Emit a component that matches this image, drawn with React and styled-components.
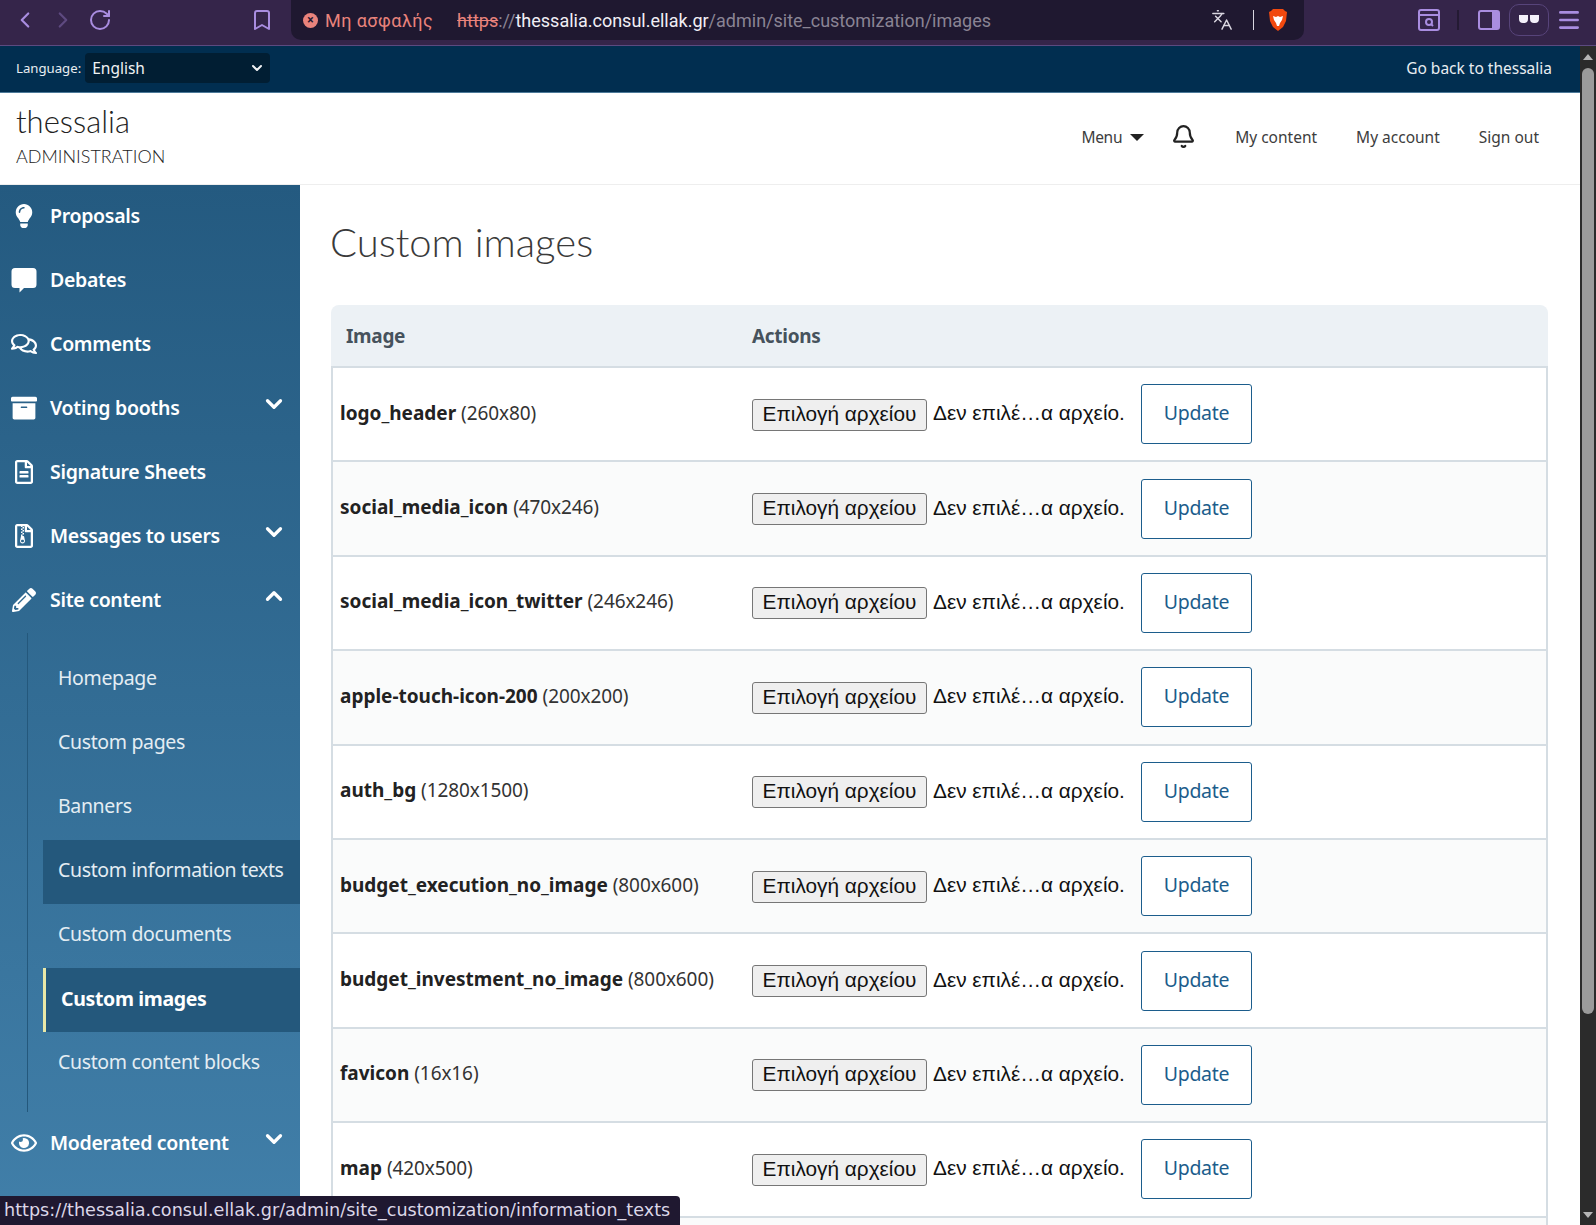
import styled, { createGlobalStyle } from "styled-components";
import { ChevronLeft, ChevronRight, ChevronDown, ChevronUp, RotateCw, Bookmark, Languages, Menu as MenuIcon, Bell } from "lucide-react";
import { FaLightbulb, FaRegComments, FaArchive, FaRegFileAlt, FaRegFileArchive, FaPencilAlt, FaRegEye } from "react-icons/fa";

const GlobalStyle = createGlobalStyle`
  html, body {
    margin: 0;
    padding: 0;
    background: #fff;
    overflow: hidden;
  }
  * { box-sizing: border-box; }
`;

const Page = styled.div`
  width: 1596px;
  height: 1225px;
  position: relative;
  overflow: hidden;
  display: flex;
  flex-direction: column;
  font-family: "Lato", "Noto Sans", sans-serif;
`;

const BrowserBar = styled.div`
  height: 46px;
  flex-shrink: 0;
  display: flex;
  align-items: flex-start;
  background: #35254a;
  border-bottom: 1px solid #5c4a80;
  color: #a98de0;
`;

const NavButtons = styled.div`
  width: 291px;
  height: 40px;
  display: flex;
  align-items: center;
  padding-left: 12px;
  gap: 12px;
`;

const BookmarkWrap = styled.span`
  display: flex;
  margin-left: 126px;
`;

const UrlBar = styled.div`
  width: 1013px;
  height: 40px;
  background: #1f1830;
  border-radius: 0 0 10px 10px;
  display: flex;
  align-items: center;
  padding: 0 16px 0 12px;
  font-family: "Roboto", "Liberation Sans", sans-serif;
  font-size: 18px;
`;

const WarnDot = styled.span`
  width: 15px;
  height: 15px;
  border-radius: 50%;
  background: #e9837c;
  color: #1f1830;
  display: flex;
  align-items: center;
  justify-content: center;
  font-size: 12px;
  font-weight: 700;
  line-height: 1;
  margin-right: 7px;
`;

const NotSecure = styled.span`
  color: #e9837c;
  margin-right: 24px;
  letter-spacing: 0.45px;
`;

const Scheme = styled.span`
  color: #e9837c;
  text-decoration: line-through;
`;

const UrlDim = styled.span`
  color: #8a8494;
`;

const UrlHost = styled.span`
  color: #f1eff5;
`;

const UrlEnd = styled.div`
  margin-left: auto;
  display: flex;
  align-items: center;
  color: #d9d6e0;
`;

const UrlSep = styled.span`
  width: 1px;
  height: 20px;
  background: #d9d6e0;
  margin: 0 14px 0 20px;
`;

const BrowserTools = styled.div`
  flex: 1;
  height: 40px;
  display: flex;
  align-items: center;
  padding-left: 114px;
`;

const ToolSep = styled.span`
  width: 2px;
  height: 20px;
  background: #241a33;
  margin: 0 19px 0 17px;
`;

const GlassesPill = styled.span`
  width: 40px;
  height: 32px;
  border: 1px solid #57447a;
  border-radius: 10px;
  display: flex;
  align-items: center;
  justify-content: center;
  margin: 0 7px 0 9px;
`;

const Frame = styled.div`
  flex: 1;
  display: flex;
  min-height: 0;
`;

const Viewport = styled.div`
  width: 1580px;
  display: flex;
  flex-direction: column;
`;

const ScrollTrack = styled.div`
  width: 16px;
  background: #2b2b2b;
  display: flex;
  flex-direction: column;
  align-items: center;
  padding: 8px 0 7px;
`;

const ScrollThumb = styled.div`
  width: 12px;
  height: 946px;
  border-radius: 6px;
  background: #9b9b9b;
  margin-top: 8px;
`;

const ScrollArrow = styled.span`
  width: 0;
  height: 0;
  border-left: 5px solid transparent;
  border-right: 5px solid transparent;
  ${(p) => (p.$down ? "border-top: 6px solid #b5b5b5; margin-top: auto;" : "border-bottom: 6px solid #b5b5b5;")}
`;

const TopBar = styled.div`
  height: 47px;
  flex-shrink: 0;
  background: #012e50;
  border-bottom: 1px solid #4d7a99;
  display: flex;
  align-items: center;
  justify-content: space-between;
  padding: 0 28px 2px 16px;
  color: #e8edf1;
  font-family: "Noto Sans", sans-serif;
`;

const LangGroup = styled.div`
  display: flex;
  align-items: center;
  gap: 4px;
`;

const LangLabel = styled.span`
  font-size: 13.2px;
`;

const LangSelect = styled.div`
  width: 185px;
  height: 30px;
  background: #011e33;
  border-radius: 4px;
  display: flex;
  align-items: center;
  justify-content: space-between;
  padding: 0 5px 0 7px;
  font-size: 15.5px;
  color: #f0f2f4;
`;

const BackLink = styled.span`
  font-size: 15.5px;
`;

const SiteHeader = styled.header`
  height: 92px;
  flex-shrink: 0;
  border-bottom: 1px solid #eeeeee;
  display: flex;
  align-items: center;
  justify-content: space-between;
  padding: 0 41px 6px 16px;
`;

const Brand = styled.div`
  display: flex;
  flex-direction: column;
  color: #222;
`;

const BrandName = styled.span`
  font-size: 31px;
  font-weight: 300;
  line-height: 38px;
`;

const BrandSub = styled.span`
  font-size: 18px;
  font-weight: 300;
  line-height: 26px;
  margin-top: 3px;
`;

const HeaderNav = styled.nav`
  display: flex;
  align-items: center;
  margin-top: 2px;
  font-family: "Noto Sans", sans-serif;
  font-size: 15.5px;
  color: #3d3d3d;
`;

const MenuLabel = styled.span`
  letter-spacing: -0.3px;
`;

const MenuCaret = styled.span`
  width: 0;
  height: 0;
  margin: 2px 0 0 8px;
  border-left: 7px solid transparent;
  border-right: 7px solid transparent;
  border-top: 7px solid #222;
`;

const BellWrap = styled.span`
  display: flex;
  margin: 0 39px 0 27px;
  color: #222;
`;

const HeaderLink = styled.span`
  margin-right: ${(p) => p.$gap}px;
`;

const Body = styled.div`
  flex: 1;
  display: flex;
  min-height: 0;
`;

const Sidebar = styled.aside`
  width: 300px;
  flex-shrink: 0;
  background: linear-gradient(180deg, #245a80 0%, #417fa9 100%);
  color: #fff;
  font-family: "Noto Sans", sans-serif;
`;

const NavItem = styled.div`
  height: 64px;
  display: flex;
  align-items: center;
  padding: 0 13px 3px 11px;
  font-size: 19.5px;
  font-weight: 600;
  letter-spacing: -0.3px;
`;

const NavIcon = styled.span`
  width: 26px;
  margin-right: 13px;
  display: flex;
  justify-content: center;
  flex-shrink: 0;
`;

const NavChevron = styled.span`
  margin-left: auto;
  display: flex;
  position: relative;
  top: -4px;
`;

const SubList = styled.div`
  margin-left: 27px;
  border-left: 1px solid #24587c;
  padding: 15px 0 16px 15px;
`;

const SubItem = styled.div`
  height: 64px;
  display: flex;
  align-items: center;
  padding: 0 0 ${(p) => (p.$active ? "3px" : "5px")} 15px;
  font-size: 19.5px;
  letter-spacing: -0.35px;
  color: ${(p) => (p.$active ? "#fff" : "#e4edf3")};
  font-weight: ${(p) => (p.$active ? 700 : 400)};
  background: ${(p) => (p.$active || p.$hover ? "#24587c" : "transparent")};
  border-left: ${(p) => (p.$active ? "3px solid #e9e8a8" : "none")};
`;

const Main = styled.main`
  flex: 1;
  padding: 28px 32px 0 31px;
  min-width: 0;
  overflow: hidden;
`;

const PageTitle = styled.h1`
  margin: 0 0 34px -1px;
  font-size: 40px;
  line-height: 58px;
  font-weight: 300;
  color: #3a3a3a;
`;

const TableHead = styled.div`
  height: 63px;
  display: grid;
  grid-template-columns: 421px 1fr;
  align-items: center;
  background: #ecf1f5;
  border-radius: 8px 8px 0 0;
  border-bottom: 2px solid #d5dde3;
  padding-left: 15px;
  color: #46525c;
  font-family: "Noto Sans", sans-serif;
  font-size: 19px;
  font-weight: 700;
  letter-spacing: -0.3px;
`;

const HeadCell = styled.span`
  &:last-child {
    margin-left: -15px;
  }
`;

const Row = styled.div`
  height: 94.4px;
  display: grid;
  grid-template-columns: 412px 1fr;
  align-items: center;
  border: 2px solid #d5dde3;
  border-top: 0;
  padding-left: 7px;
  background: ${(p) => (p.$odd ? "#fafbfb" : "#fff")};
`;

const NameCell = styled.div`
  padding-bottom: 3px;
  font-family: "Noto Sans", sans-serif;
  font-size: 19px;
  color: #222;
`;

const ImageName = styled.strong`
  font-weight: 700;
`;

const ImageSize = styled.span`
  color: #333;
  letter-spacing: -0.1px;
`;

const ActionCell = styled.div`
  display: flex;
  align-items: center;
  font-family: "Liberation Sans", sans-serif;
  font-size: 20.8px;
  color: #111;
`;

const FileButton = styled.span`
  width: 175px;
  height: 32px;
  background: #efefef;
  border: 1px solid #767676;
  border-radius: 3px;
  display: flex;
  align-items: center;
  justify-content: center;
  padding-bottom: 2px;
  margin: 1px 6px 0 0;
`;

const FileNote = styled.span`
  width: 208px;
  white-space: nowrap;
  padding-bottom: 2px;
`;

const UpdateButton = styled.span`
  width: 111px;
  height: 60px;
  border: 1px solid #1c5d8c;
  border-radius: 3px;
  background: #fff;
  display: flex;
  align-items: center;
  justify-content: center;
  padding-bottom: 3px;
  color: #1c5d8c;
  font-family: "Noto Sans", sans-serif;
  font-size: 19.5px;
  letter-spacing: -0.3px;
`;

const StatusTip = styled.div`
  position: absolute;
  left: 0;
  bottom: 0;
  width: 680px;
  height: 29px;
  background: #1f1830;
  border-radius: 0 4px 0 0;
  color: #dcd7e8;
  font-family: "DejaVu Sans", sans-serif;
  font-size: 17.6px;
  line-height: 29px;
  padding-left: 4px;
  white-space: nowrap;
  overflow: hidden;
`;

function DebateIcon() {
  return (
    <svg width="26" height="26" viewBox="0 0 26 26" fill="currentColor">
      <path d="M4 1h18a3.5 3.5 0 0 1 3.5 3.5v13a3.5 3.5 0 0 1-3.5 3.5H13l-4.5 4.5V21H4a3.5 3.5 0 0 1-3.5-3.5v-13A3.5 3.5 0 0 1 4 1z" />
    </svg>
  );
}

const navTop = [
  { label: "Proposals", icon: <FaLightbulb size={24} /> },
  { label: "Debates", icon: <DebateIcon /> },
  { label: "Comments", icon: <FaRegComments size={26} /> },
  { label: "Voting booths", icon: <FaArchive size={26} />, chevron: "down" },
  { label: "Signature Sheets", icon: <FaRegFileAlt size={24} /> },
  { label: "Messages to users", icon: <FaRegFileArchive size={24} />, chevron: "down" },
  { label: "Site content", icon: <FaPencilAlt size={24} />, chevron: "up" },
];

const subItems = [
  { label: "Homepage" },
  { label: "Custom pages" },
  { label: "Banners" },
  { label: "Custom information texts", hover: true },
  { label: "Custom documents" },
  { label: "Custom images", active: true },
  { label: "Custom content blocks" },
];

const images = [
  ["logo_header", "260x80"],
  ["social_media_icon", "470x246"],
  ["social_media_icon_twitter", "246x246"],
  ["apple-touch-icon-200", "200x200"],
  ["auth_bg", "1280x1500"],
  ["budget_execution_no_image", "800x600"],
  ["budget_investment_no_image", "800x600"],
  ["favicon", "16x16"],
  ["map", "420x500"],
];

function NavRow({ label, icon, chevron }) {
  return (
    <NavItem>
      <NavIcon>{icon}</NavIcon>
      {label}
      {chevron && (
        <NavChevron>
          {chevron === "up" ? <ChevronUp size={26} strokeWidth={3} /> : <ChevronDown size={26} strokeWidth={3} />}
        </NavChevron>
      )}
    </NavItem>
  );
}

function BraveLogo() {
  return (
    <svg width="20" height="24" viewBox="0 0 20 24">
      <path d="M5 1h10l2 2 2 1-1 9-3 6-5 4-5-4-3-6-1-9 2-1z" fill="#f1490f" />
      <path d="M5 8l3 1 2-1 2 1 3-1-1 4-2 3-1 3h-2l-1-3-2-3z" fill="#fff" />
    </svg>
  );
}

function Browser() {
  return (
    <BrowserBar>
      <NavButtons>
        <ChevronLeft size={26} strokeWidth={2} />
        <ChevronRight size={26} strokeWidth={2} color="#5e4a80" />
        <RotateCw size={24} strokeWidth={2} />
        <BookmarkWrap>
          <Bookmark size={24} strokeWidth={2} />
        </BookmarkWrap>
      </NavButtons>
      <UrlBar>
        <WarnDot>×</WarnDot>
        <NotSecure>Μη ασφαλής</NotSecure>
        <Scheme>https</Scheme>
        <UrlDim>://</UrlDim>
        <UrlHost>thessalia.consul.ellak.gr</UrlHost>
        <UrlDim>/admin/site_customization/images</UrlDim>
        <UrlEnd>
          <Languages size={22} strokeWidth={1.6} />
          <UrlSep />
          <BraveLogo />
        </UrlEnd>
      </UrlBar>
      <BrowserTools>
        <svg width="22" height="24" viewBox="0 0 22 24" fill="none" stroke="#a98de0" strokeWidth="2">
          <rect x="1" y="2" width="20" height="20" rx="2" />
          <path d="M1 7h20" />
          <circle cx="11" cy="14" r="3" />
          <path d="M13 16l2 2" />
        </svg>
        <ToolSep />
        <svg width="22" height="22" viewBox="0 0 22 22">
          <rect x="1" y="2" width="20" height="18" rx="2" fill="none" stroke="#a98de0" strokeWidth="2" />
          <rect x="14" y="2" width="7" height="18" fill="#a98de0" />
        </svg>
        <GlassesPill>
          <svg width="20" height="10" viewBox="0 0 20 10" fill="#f4f1fa">
            <path d="M0 0h9v4a4 4 0 0 1-4 4h-1a4 4 0 0 1-4-4zM11 0h9v4a4 4 0 0 1-4 4h-1a4 4 0 0 1-4-4z" />
          </svg>
        </GlassesPill>
        <MenuIcon size={26} strokeWidth={2.4} />
      </BrowserTools>
    </BrowserBar>
  );
}

export default function App() {
  return (
    <Page>
      <GlobalStyle />
      <Browser />
      <Frame>
        <Viewport>
          <TopBar>
            <LangGroup>
              <LangLabel>Language:</LangLabel>
              <LangSelect>
                English
                <ChevronDown size={16} strokeWidth={3} />
              </LangSelect>
            </LangGroup>
            <BackLink>Go back to thessalia</BackLink>
          </TopBar>
          <SiteHeader>
            <Brand>
              <BrandName>thessalia</BrandName>
              <BrandSub>ADMINISTRATION</BrandSub>
            </Brand>
            <HeaderNav>
              <MenuLabel>Menu</MenuLabel>
              <MenuCaret />
              <BellWrap>
                <Bell size={25} strokeWidth={2.1} />
              </BellWrap>
              <HeaderLink $gap={39}>My content</HeaderLink>
              <HeaderLink $gap={39}>My account</HeaderLink>
              <HeaderLink $gap={0}>Sign out</HeaderLink>
            </HeaderNav>
          </SiteHeader>
          <Body>
            <Sidebar>
              {navTop.map((item) => (
                <NavRow key={item.label} {...item} />
              ))}
              <SubList>
                {subItems.map((item) => (
                  <SubItem key={item.label} $active={item.active} $hover={item.hover}>
                    {item.label}
                  </SubItem>
                ))}
              </SubList>
              <NavRow label="Moderated content" icon={<FaRegEye size={26} />} chevron="down" />
            </Sidebar>
            <Main>
              <PageTitle>Custom images</PageTitle>
              <TableHead>
                <HeadCell>Image</HeadCell>
                <HeadCell>Actions</HeadCell>
              </TableHead>
              {images.map(([name, size], i) => (
                <Row key={name} $odd={i % 2 === 1}>
                  <NameCell>
                    <ImageName>{name}</ImageName> <ImageSize>({size})</ImageSize>
                  </NameCell>
                  <ActionCell>
                    <FileButton>Επιλογή αρχείου</FileButton>
                    <FileNote>Δεν επιλέ…α αρχείο.</FileNote>
                    <UpdateButton>Update</UpdateButton>
                  </ActionCell>
                </Row>
              ))}
              <Row $odd />
            </Main>
          </Body>
        </Viewport>
        <ScrollTrack>
          <ScrollArrow />
          <ScrollThumb />
          <ScrollArrow $down />
        </ScrollTrack>
      </Frame>
      <StatusTip>https://thessalia.consul.ellak.gr/admin/site_customization/information_texts</StatusTip>
    </Page>
  );
}
